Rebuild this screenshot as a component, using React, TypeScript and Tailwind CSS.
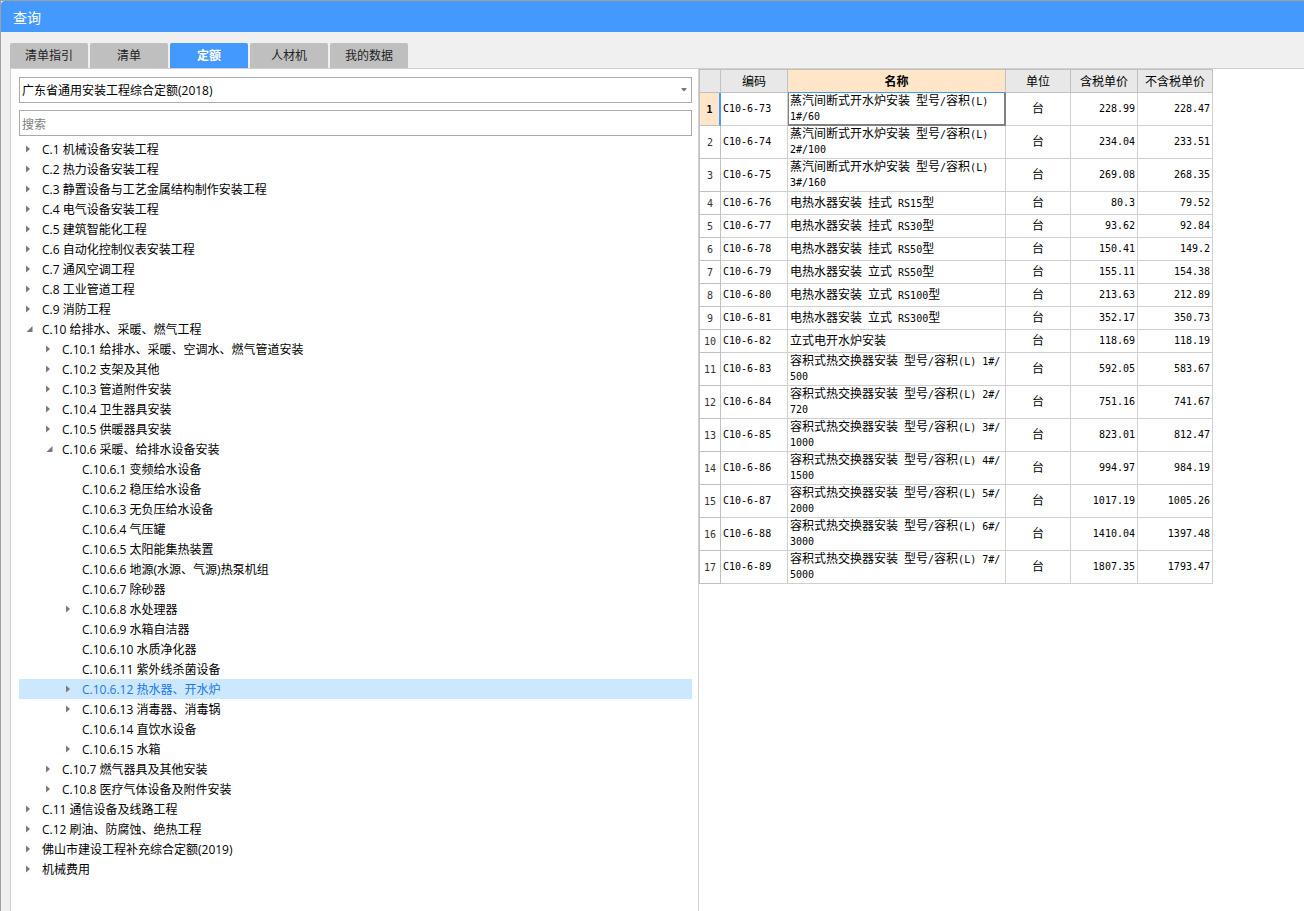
import * as React from 'react';
import clsx from 'clsx';

const uiFont = "font-['Open_Sans','Noto_Sans_CJK_SC',sans-serif]";
const gridFont = "font-['DejaVu_Sans_Mono','Noto_Sans_CJK_SC',monospace]";

const tabs = ['清单指引', '清单', '定额', '人材机', '我的数据'];

type TreeNode = {
  label: string;
  leaf?: boolean;
  children?: TreeNode[];
};

const tree: TreeNode[] = [
  { label: 'C.1 机械设备安装工程' },
  { label: 'C.2 热力设备安装工程' },
  { label: 'C.3 静置设备与工艺金属结构制作安装工程' },
  { label: 'C.4 电气设备安装工程' },
  { label: 'C.5 建筑智能化工程' },
  { label: 'C.6 自动化控制仪表安装工程' },
  { label: 'C.7 通风空调工程' },
  { label: 'C.8 工业管道工程' },
  { label: 'C.9 消防工程' },
  {
    label: 'C.10 给排水、采暖、燃气工程',
    children: [
      { label: 'C.10.1 给排水、采暖、空调水、燃气管道安装' },
      { label: 'C.10.2 支架及其他' },
      { label: 'C.10.3 管道附件安装' },
      { label: 'C.10.4 卫生器具安装' },
      { label: 'C.10.5 供暖器具安装' },
      {
        label: 'C.10.6 采暖、给排水设备安装',
        children: [
          { label: 'C.10.6.1 变频给水设备', leaf: true },
          { label: 'C.10.6.2 稳压给水设备', leaf: true },
          { label: 'C.10.6.3 无负压给水设备', leaf: true },
          { label: 'C.10.6.4 气压罐', leaf: true },
          { label: 'C.10.6.5 太阳能集热装置', leaf: true },
          { label: 'C.10.6.6 地源(水源、气源)热泵机组', leaf: true },
          { label: 'C.10.6.7 除砂器', leaf: true },
          { label: 'C.10.6.8 水处理器' },
          { label: 'C.10.6.9 水箱自洁器', leaf: true },
          { label: 'C.10.6.10 水质净化器', leaf: true },
          { label: 'C.10.6.11 紫外线杀菌设备', leaf: true },
          { label: 'C.10.6.12 热水器、开水炉' },
          { label: 'C.10.6.13 消毒器、消毒锅' },
          { label: 'C.10.6.14 直饮水设备', leaf: true },
          { label: 'C.10.6.15 水箱' },
        ],
      },
      { label: 'C.10.7 燃气器具及其他安装' },
      { label: 'C.10.8 医疗气体设备及附件安装' },
    ],
  },
  { label: 'C.11 通信设备及线路工程' },
  { label: 'C.12 刷油、防腐蚀、绝热工程' },
  { label: '佛山市建设工程补充综合定额(2019)' },
  { label: '机械费用' },
];

const rows = [
  { code: 'C10-6-73', name: '蒸汽间断式开水炉安装 型号/容积(L)\n1#/60', tax: '228.99', net: '228.47' },
  { code: 'C10-6-74', name: '蒸汽间断式开水炉安装 型号/容积(L)\n2#/100', tax: '234.04', net: '233.51' },
  { code: 'C10-6-75', name: '蒸汽间断式开水炉安装 型号/容积(L)\n3#/160', tax: '269.08', net: '268.35' },
  { code: 'C10-6-76', name: '电热水器安装 挂式 RS15型', tax: '80.3', net: '79.52' },
  { code: 'C10-6-77', name: '电热水器安装 挂式 RS30型', tax: '93.62', net: '92.84' },
  { code: 'C10-6-78', name: '电热水器安装 挂式 RS50型', tax: '150.41', net: '149.2' },
  { code: 'C10-6-79', name: '电热水器安装 立式 RS50型', tax: '155.11', net: '154.38' },
  { code: 'C10-6-80', name: '电热水器安装 立式 RS100型', tax: '213.63', net: '212.89' },
  { code: 'C10-6-81', name: '电热水器安装 立式 RS300型', tax: '352.17', net: '350.73' },
  { code: 'C10-6-82', name: '立式电开水炉安装', tax: '118.69', net: '118.19' },
  { code: 'C10-6-83', name: '容积式热交换器安装 型号/容积(L) 1#/\n500', tax: '592.05', net: '583.67' },
  { code: 'C10-6-84', name: '容积式热交换器安装 型号/容积(L) 2#/\n720', tax: '751.16', net: '741.67' },
  { code: 'C10-6-85', name: '容积式热交换器安装 型号/容积(L) 3#/\n1000', tax: '823.01', net: '812.47' },
  { code: 'C10-6-86', name: '容积式热交换器安装 型号/容积(L) 4#/\n1500', tax: '994.97', net: '984.19' },
  { code: 'C10-6-87', name: '容积式热交换器安装 型号/容积(L) 5#/\n2000', tax: '1017.19', net: '1005.26' },
  { code: 'C10-6-88', name: '容积式热交换器安装 型号/容积(L) 6#/\n3000', tax: '1410.04', net: '1397.48' },
  { code: 'C10-6-89', name: '容积式热交换器安装 型号/容积(L) 7#/\n5000', tax: '1807.35', net: '1793.47' },
];

// Half-width characters take half the advance of a full-width one
const HalfWidth: React.FC<{ text: string }> = ({ text }) => (
  <>
    {text.split(/([ -~]+)/).map((part, i) =>
      i % 2 ? (
        <span key={i} className="text-[10px]">
          {part}
        </span>
      ) : (
        part
      ),
    )}
  </>
);

const indents = ['pl-[3px]', 'pl-[23px]', 'pl-[43px]'];

type TreeItemProps = {
  node: TreeNode;
  depth: number;
  selected: string;
  onSelect: (label: string) => void;
};

const TreeItem: React.FC<TreeItemProps> = ({ node, depth, selected, onSelect }) => {
  const active = node.label === selected;
  return (
    <li role="treeitem" aria-selected={active} aria-expanded={node.leaf ? undefined : !!node.children}>
      <button
        type="button"
        onClick={() => onSelect(node.label)}
        className={clsx(
          'flex h-5 w-full items-center text-left whitespace-nowrap',
          indents[depth],
          active ? 'bg-[#cce8ff] text-[#1a78e8]' : 'text-black',
        )}
      >
        <span className="w-5 shrink-0 pl-1">
          {!node.leaf && (
            <svg width="8" height="8" viewBox="0 0 8 8" fill="#7a7a7a" aria-hidden="true">
              {node.children ? <path d="M6.5 1v6h-6z" /> : <path d="M0 .5v7L4 4z" />}
            </svg>
          )}
        </span>
        <span className="pt-[2px]">{node.label}</span>
      </button>
      {node.children && (
        <ul role="group">
          {node.children.map((child) => (
            <TreeItem key={child.label} node={child} depth={depth + 1} selected={selected} onSelect={onSelect} />
          ))}
        </ul>
      )}
    </li>
  );
};

const PriceTable: React.FC = () => {
  const head = 'border-t border-r border-b border-[#c0c0c0] bg-[#e8e8e8] pt-[2px] font-normal';
  const cell = 'border-r border-b border-[#d0d0d0]';
  return (
    <table className={`w-[514px] table-fixed border-separate border-spacing-0 text-xs leading-[14px] text-black ${gridFont}`}>
      <colgroup>
        <col className="w-[22px]" />
        <col className="w-[67px]" />
        <col className="w-[218px]" />
        <col className="w-[65px]" />
        <col className="w-[67px]" />
        <col className="w-[75px]" />
      </colgroup>
      <thead>
        <tr className="h-6">
          <td className={`${head} border-l`} />
          <th scope="col" className={head}>编码</th>
          <th
            scope="col"
            className="border-t border-r border-b border-t-[#c0c0c0] border-r-[#c0c0c0] border-b-[#4499ff] bg-[#ffe6c8] pt-[2px] font-bold"
          >
            名称
          </th>
          <th scope="col" className={head}>单位</th>
          <th scope="col" className={head}>含税单价</th>
          <th scope="col" className={head}>不含税单价</th>
        </tr>
      </thead>
      <tbody>
        {rows.map((row, i) => (
          <tr key={row.code} className={row.name.includes('\n') ? 'h-[33px]' : 'h-[23px]'}>
            <th
              scope="row"
              className={clsx(
                'border-b border-l border-b-[#c0c0c0] border-l-[#c0c0c0] pt-[2px] text-center text-[10px]',
                i === 0
                  ? 'border-r-2 border-r-[#4499ff] bg-[#ffe6c8] font-bold'
                  : 'border-r border-r-[#c0c0c0] font-normal text-[#333333]',
              )}
            >
              {i + 1}
            </th>
            <td className={`${cell} pl-[2px] text-[10px]`}>{row.code}</td>
            <td
              className={clsx(
                'whitespace-pre',
                i === 0 ? 'border-r-2 border-b-2 border-l border-[#808080] pt-px pl-px' : `${cell} pl-[2px]`,
              )}
            >
              <HalfWidth text={row.name} />
            </td>
            <td className={`${cell} text-center`}>台</td>
            <td className={`${cell} pr-[2px] text-right text-[10px]`}>{row.tax}</td>
            <td className={`${cell} pr-[2px] text-right text-[10px]`}>{row.net}</td>
          </tr>
        ))}
      </tbody>
    </table>
  );
};

export default function App() {
  const [tab, setTab] = React.useState('定额');
  const [selected, setSelected] = React.useState('C.10.6.12 热水器、开水炉');

  return (
    <div className={`flex min-h-screen flex-col border-t border-l border-[#a0a0a0] bg-[#f0f0f0] text-xs ${uiFont}`}>
      <header className="flex h-[31px] items-center rounded-tl-sm bg-[#4499ff] px-3 pt-[2px]">
        <h1 className="text-sm text-white">查询</h1>
      </header>
      <div role="tablist" className="flex gap-[2px] pt-[11px] pl-[9px]">
        {tabs.map((name) => (
          <button
            key={name}
            type="button"
            role="tab"
            aria-selected={tab === name}
            onClick={() => setTab(name)}
            className={clsx(
              'h-[25px] w-[78px] rounded-t-xs',
              tab === name ? 'bg-[#4499ff] font-bold text-white' : 'bg-[#bfbfbf] text-[#222222]',
            )}
          >
            {name}
          </button>
        ))}
      </div>
      <main className="ml-[9px] flex grow border-t border-l border-[#d0d0d0] bg-white">
        <section className="min-w-0 flex-[673] border-r border-[#d0d0d0] pt-2 pr-[6px] pb-2 pl-2">
          <div className="relative">
            <select
              aria-label="定额库"
              className="block h-[26px] w-full appearance-none rounded-none border border-[#ababab] bg-white pt-[2px] pr-4 pl-[2px] text-black"
            >
              <option>广东省通用安装工程综合定额(2018)</option>
            </select>
            <svg
              className="pointer-events-none absolute top-[11px] right-[5px]"
              width="6"
              height="4"
              viewBox="0 0 6 4"
              fill="#7a7a7a"
              aria-hidden="true"
            >
              <path d="M.5 0h5v1L3 3.5.5 1z" />
            </svg>
          </div>
          <input
            type="text"
            aria-label="搜索"
            placeholder="搜索"
            className="mt-[7px] block h-[26px] w-full border border-[#ababab] bg-white px-[2px] pt-[2px] placeholder:text-[#808080]"
          />
          <ul role="tree" className="mt-[3px]">
            {tree.map((node) => (
              <TreeItem key={node.label} node={node} depth={0} selected={selected} onSelect={setSelected} />
            ))}
          </ul>
        </section>
        <section className="min-w-0 flex-[605] overflow-x-auto">
          <PriceTable />
        </section>
      </main>
    </div>
  );
}
